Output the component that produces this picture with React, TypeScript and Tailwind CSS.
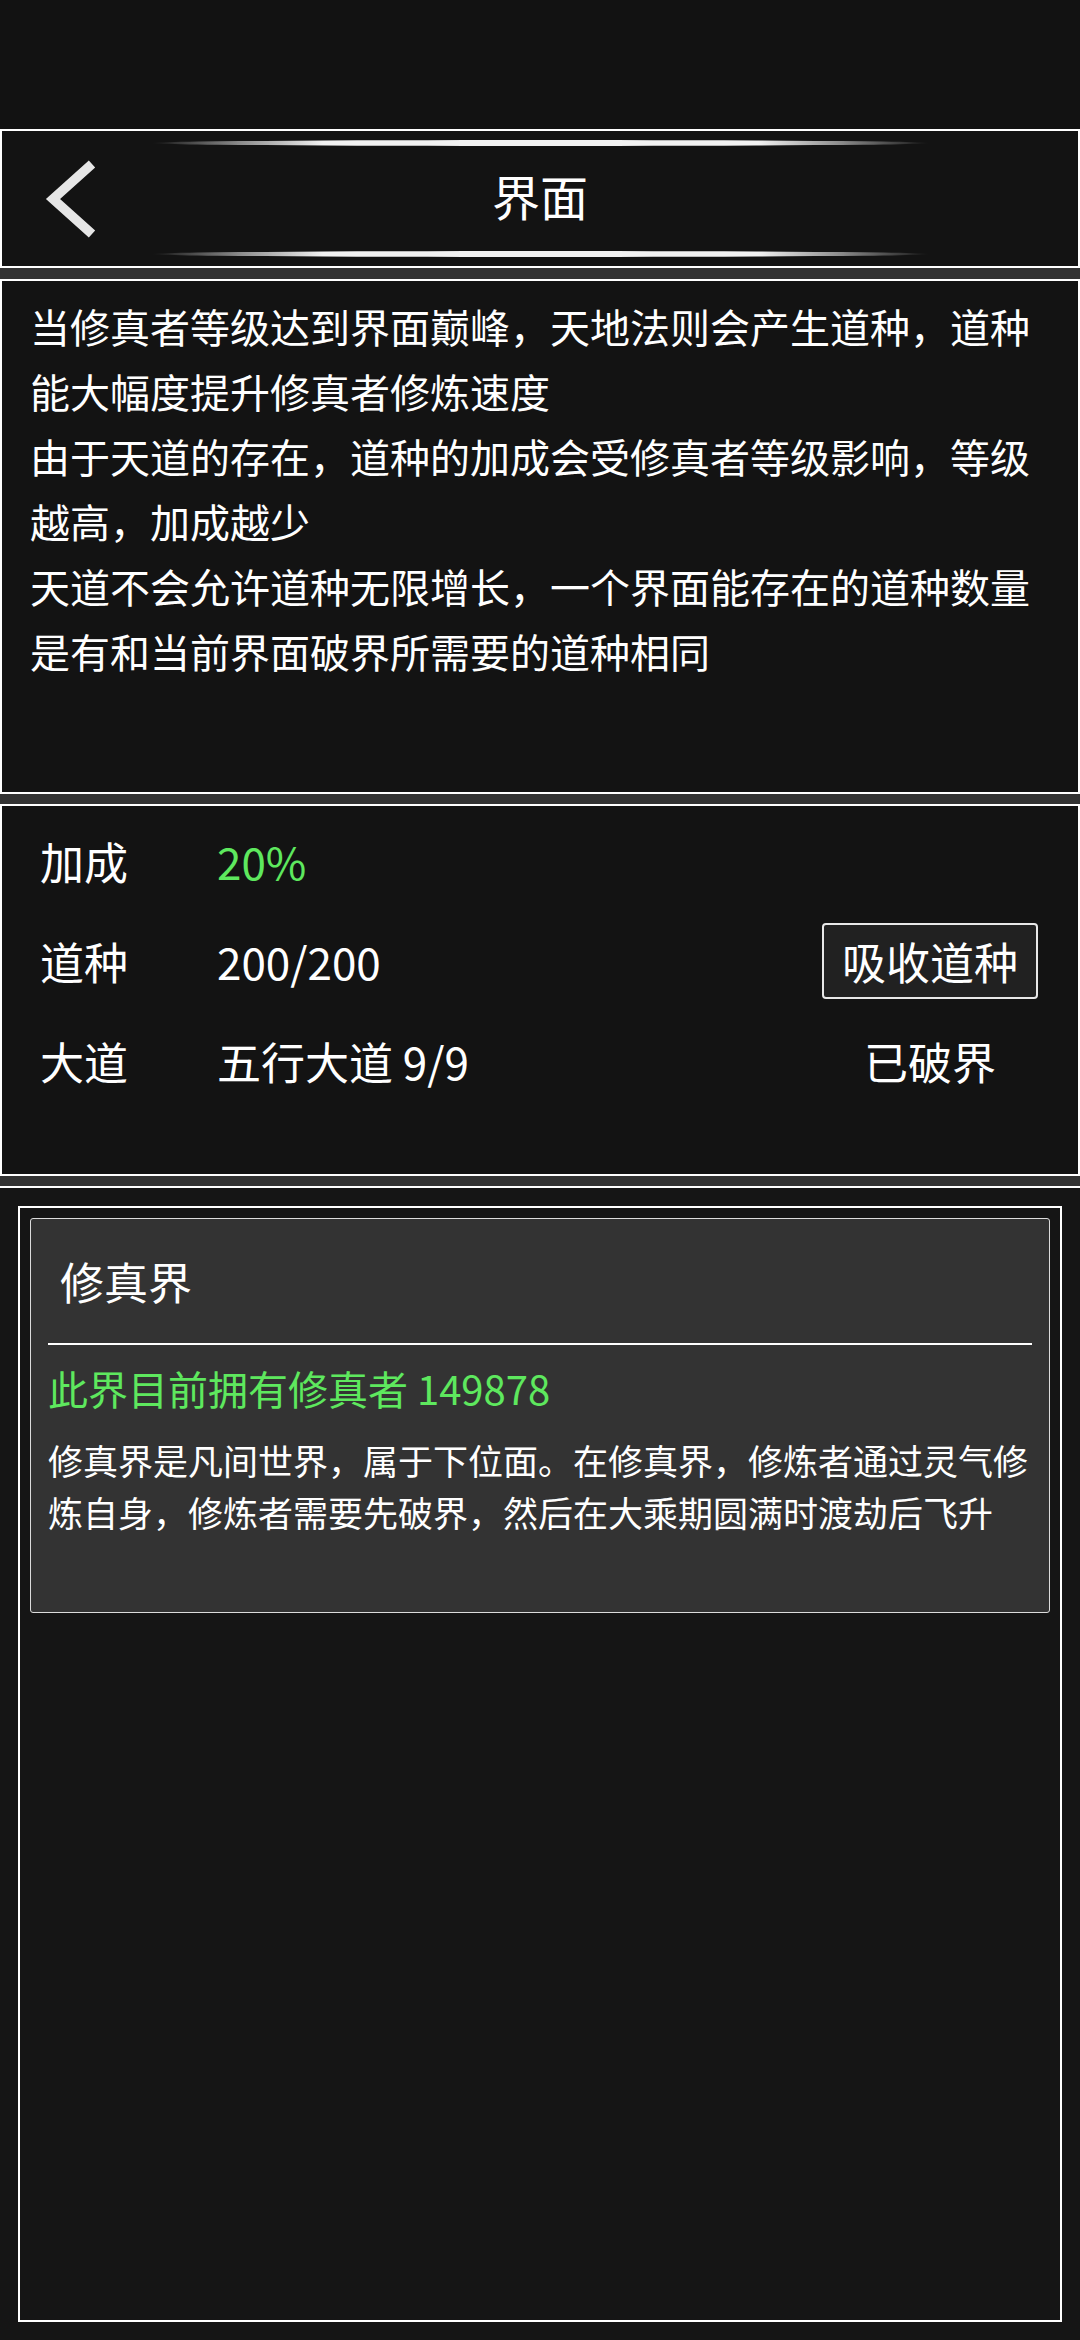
import React from "react";

const font = "font-['Noto_Sans_CJK_SC','Noto_Sans',sans-serif]";

const intro = [
  "当修真者等级达到界面巅峰，天地法则会产生道种，道种能大幅度提升修真者修炼速度",
  "由于天道的存在，道种的加成会受修真者等级影响，等级越高，加成越少",
  "天道不会允许道种无限增长，一个界面能存在的道种数量是有和当前界面破界所需要的道种相同",
];

function GlowLine() {
  return (
    <div className="mx-auto h-[6px] w-[777px] rounded-[50%] bg-[linear-gradient(to_right,transparent,#6a6a6a_8%,#f2f2f2_22%,#f2f2f2_78%,#6a6a6a_92%,transparent)]" />
  );
}

function BackIcon() {
  return (
    <svg width="60" height="90" viewBox="40 154 60 90" className="ml-[38px] block">
      <polyline
        points="92,164 53,199 92,234"
        fill="none"
        stroke="#e6e6e6"
        strokeWidth="9.5"
        strokeLinejoin="miter"
        strokeLinecap="butt"
      />
    </svg>
  );
}

function StatRow({ label, value, green, right }: { label: string; value: string; green?: boolean; right?: React.ReactNode }) {
  return (
    <div className="flex h-[100px] items-center">
      <div className="w-[215px] pl-[38px] text-[44px] leading-none text-white">{label}</div>
      <div className={`flex-1 text-[44px] leading-none ${green ? "text-[#5ee85e]" : "text-white"}`}>{value}</div>
      <div className="flex w-[216px] justify-center">{right}</div>
    </div>
  );
}

export default function App() {
  return (
    <div className={`${font} flex min-h-[2340px] w-[1080px] flex-col bg-[#333333]`}>
      <div className="h-[129px] bg-[#121212]" />

      {/* header */}
      <div className="mb-[11px] flex h-[139px] flex-col border-2 border-white bg-[#131313]">
        <div className="mt-[9px]">
          <GlowLine />
        </div>
        <div className="grid h-[105px] grid-cols-[1fr_auto_1fr] items-center">
          <div className="flex items-center">
            <BackIcon />
          </div>
          <div className="pb-[8px] text-[48px] leading-none text-white">界面</div>
          <div />
        </div>
        <GlowLine />
      </div>

      <div className="flex flex-1 flex-col gap-[10px]">
        {/* intro */}
        <div className="h-[515px] border-2 border-white bg-[#131313] px-[28px] pt-[13px]">
          {intro.map((p) => (
            <p key={p} className="text-[40px] leading-[65px] text-white">
              {p}
            </p>
          ))}
        </div>

        {/* stats */}
        <div className="h-[372px] border-2 border-white bg-[#131313] pt-[5px] pr-[40px]">
          <StatRow label="加成" value="20%" green />
          <StatRow
            label="道种"
            value="200/200"
            right={
              <button className="flex h-[76px] w-[216px] items-center justify-center rounded-[4px] border-2 border-[#e8e8e8] bg-[#212121] text-[44px] leading-none text-white">
                吸收道种
              </button>
            }
          />
          <StatRow label="大道" value="五行大道 9/9" right={<span className="text-[44px] leading-none text-white">已破界</span>} />
        </div>

        {/* realm list */}
        <div className="flex flex-1 flex-col border-t-2 border-white bg-[#151515] p-[18px]">
          <div className="flex flex-1 flex-col border-2 border-white p-[10px]">
            <div className="flex h-[395px] flex-col rounded-[3px] border border-[#dcdcdc] bg-[#333333] px-[17px]">
              <div className="flex h-[124px] items-center pl-[12px] text-[44px] leading-none text-white">修真界</div>
              <div className="h-[2px] bg-white" />
              <div className="mt-[13px] text-[40px] leading-[60px] text-[#5ee85e]">此界目前拥有修真者 149878</div>
              <p className="mt-[16px] mr-[-10px] text-[35px] leading-[52px] text-white">
                修真界是凡间世界，属于下位面。在修真界，修炼者通过灵气修炼自身，修炼者需要先破界，然后在大乘期圆满时渡劫后飞升
              </p>
            </div>
          </div>
        </div>
      </div>
    </div>
  );
}
